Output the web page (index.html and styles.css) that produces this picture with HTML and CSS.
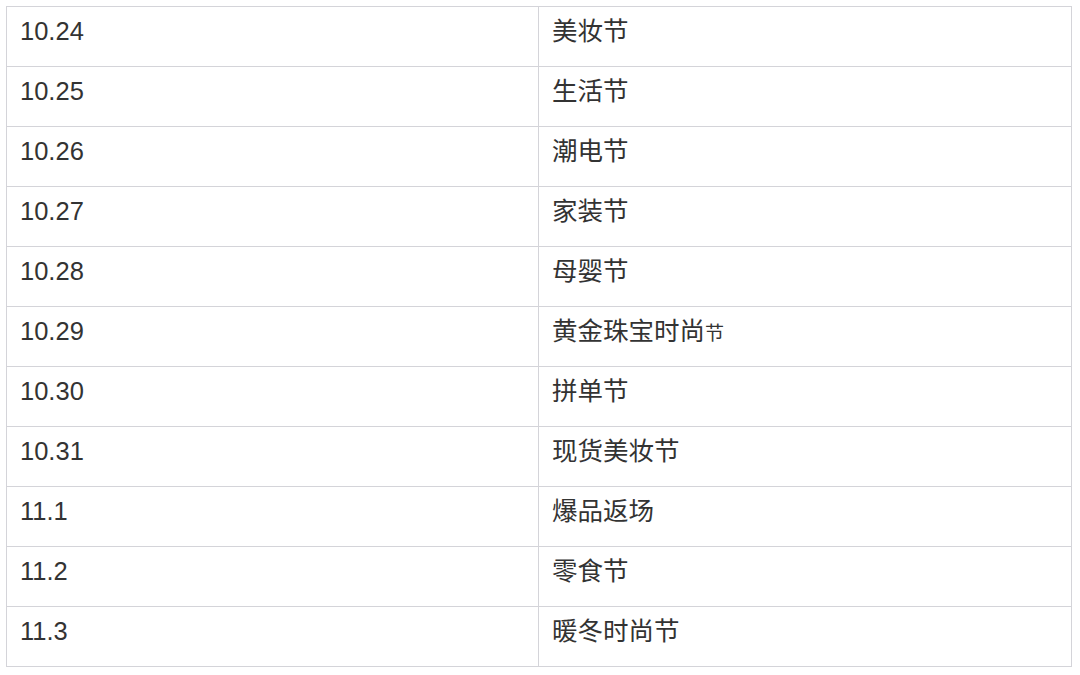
FILE: index.html
```html
<!DOCTYPE html>
<html lang="zh">
<head>
<meta charset="utf-8">
<link rel="stylesheet" href="styles.css">
</head>
<body>
<table class="schedule">
  <tbody>
    <tr><td>10.24</td><td>美妆节</td></tr>
    <tr><td>10.25</td><td>生活节</td></tr>
    <tr><td>10.26</td><td>潮电节</td></tr>
    <tr><td>10.27</td><td>家装节</td></tr>
    <tr><td>10.28</td><td>母婴节</td></tr>
    <tr><td>10.29</td><td>黄金珠宝时尚<span class="small">节</span></td></tr>
    <tr><td>10.30</td><td>拼单节</td></tr>
    <tr><td>10.31</td><td>现货美妆节</td></tr>
    <tr><td>11.1</td><td>爆品返场</td></tr>
    <tr><td>11.2</td><td>零食节</td></tr>
    <tr><td>11.3</td><td>暖冬时尚节</td></tr>
  </tbody>
</table>
</body>
</html>
```

FILE: styles.css
```css
html, body {
  margin: 0;
  padding: 0;
  background: #ffffff;
}
body {
  padding: 6px 0 0 6px;
  font-family: "Liberation Sans", "Noto Sans CJK SC", sans-serif;
  color: #333333;
}
.schedule {
  border-collapse: collapse;
  width: 1066px;
  table-layout: fixed;
}
.schedule td {
  border: 1px solid #d4d4d9;
  height: 60px;
  box-sizing: border-box;
  padding: 9px 13px 0 13px;
  vertical-align: top;
  font-size: 25.5px;
  line-height: 30px;
}
.schedule td:first-child {
  width: 532px;
}
.small {
  font-size: 19px;
}
```
